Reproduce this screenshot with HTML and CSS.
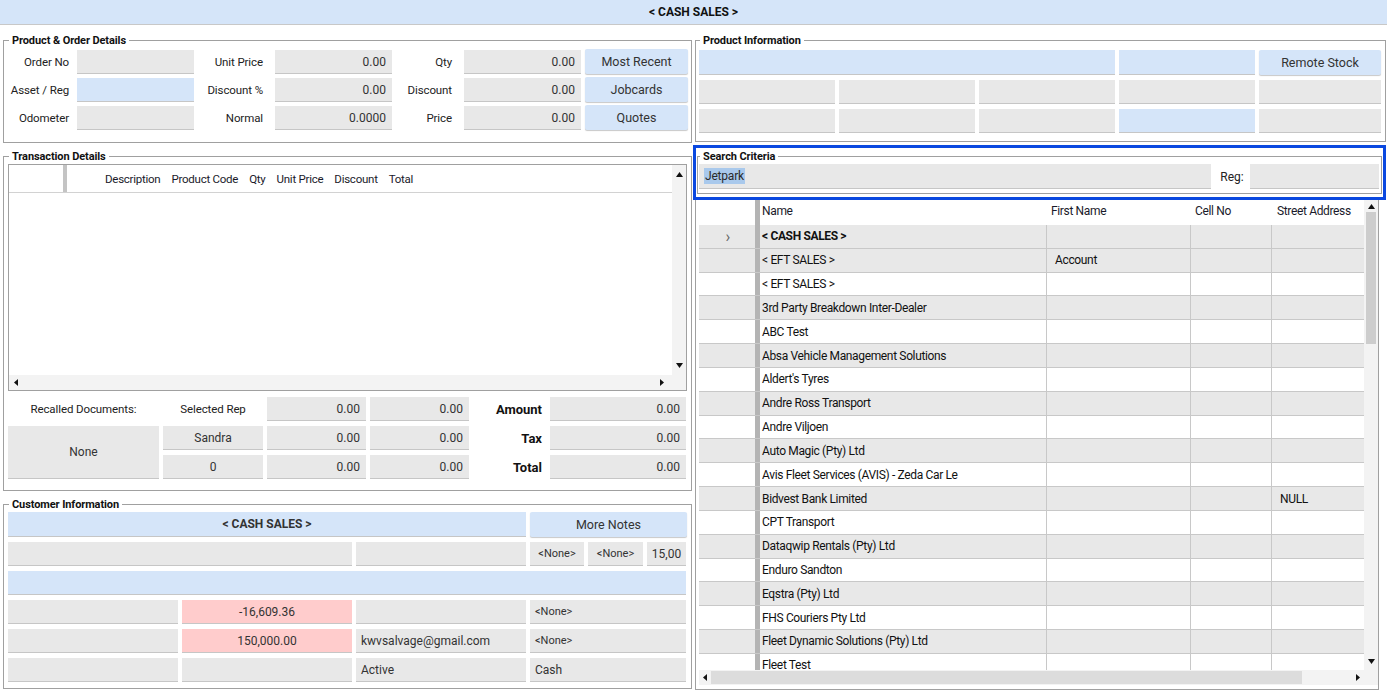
FILE: index.html
```html
<!DOCTYPE html>
<html>
<head>
<meta charset="utf-8">
<title>Cash Sales</title>
<link rel="stylesheet" href="styles.css">
</head>
<body>
<div class="titlebar">&lt; CASH SALES &gt;</div>
<div class="main">
  <div class="leftcol">
    <fieldset class="group g-order">
      <legend>Product &amp; Order Details</legend>
      <div class="order-grid">
        <span class="lbl l1">Order No</span><div class="fld"></div>
        <span class="lbl l2">Unit Price</span><div class="fld num">0.00</div>
        <span class="lbl l3">Qty</span><div class="fld num">0.00</div>
        <div class="btn">Most Recent</div>

        <span class="lbl l1">Asset / Reg</span><div class="fld blue"></div>
        <span class="lbl l2">Discount %</span><div class="fld num">0.00</div>
        <span class="lbl l3">Discount</span><div class="fld num">0.00</div>
        <div class="btn">Jobcards</div>

        <span class="lbl l1">Odometer</span><div class="fld"></div>
        <span class="lbl l2">Normal</span><div class="fld num">0.0000</div>
        <span class="lbl l3">Price</span><div class="fld num">0.00</div>
        <div class="btn">Quotes</div>
      </div>
    </fieldset>

    <fieldset class="group g-trans">
      <legend>Transaction Details</legend>
      <div class="tgrid">
        <div class="tgrid-body">
          <div class="tgrid-head">
            <div class="t-rowhdr"></div>
            <div class="t-bar"></div>
            <span class="th">Description</span>
            <span class="th">Product Code</span>
            <span class="th">Qty</span>
            <span class="th">Unit Price</span>
            <span class="th">Discount</span>
            <span class="th">Total</span>
          </div>
        </div>
        <div class="vscroll t-vs">
          <svg class="arr" width="7" height="5" viewBox="0 0 7 5"><polygon points="3.5,0 7,5 0,5" fill="#111"/></svg>
          <svg class="arr" width="7" height="5" viewBox="0 0 7 5"><polygon points="0,0 7,0 3.5,5" fill="#111"/></svg>
        </div>
        <div class="hscroll t-hs">
          <svg class="arr" width="4" height="7" viewBox="0 0 4 7"><polygon points="4,0 4,7 0,3.5" fill="#111"/></svg>
          <svg class="arr" width="4" height="7" viewBox="0 0 4 7"><polygon points="0,0 4,3.5 0,7" fill="#111"/></svg>
        </div>
      </div>
      <div class="totals">
        <span class="plain">Recalled Documents:</span>
        <span class="plain">Selected Rep</span>
        <div class="fld num">0.00</div>
        <div class="fld num">0.00</div>
        <span class="blbl">Amount</span>
        <div class="fld num">0.00</div>

        <div class="fld center none">None</div>
        <div class="fld center">Sandra</div>
        <div class="fld num">0.00</div>
        <div class="fld num">0.00</div>
        <span class="blbl">Tax</span>
        <div class="fld num">0.00</div>

        <div class="fld center">0</div>
        <div class="fld num">0.00</div>
        <div class="fld num">0.00</div>
        <span class="blbl">Total</span>
        <div class="fld num">0.00</div>
      </div>
    </fieldset>

    <fieldset class="group g-cust">
      <legend>Customer Information</legend>
      <div class="cust-grid">
        <div class="fld blue center bold span3">&lt; CASH SALES &gt;</div>
        <div class="btn">More Notes</div>

        <div class="fld span2"></div>
        <div class="fld"></div>
        <div class="subrow">
          <div class="fld center sm">&lt;None&gt;</div>
          <div class="fld center sm">&lt;None&gt;</div>
          <div class="fld center">15,00</div>
        </div>

        <div class="fld blue span4"></div>

        <div class="fld"></div>
        <div class="fld pink center">-16,609.36</div>
        <div class="fld"></div>
        <div class="fld left sm">&lt;None&gt;</div>

        <div class="fld"></div>
        <div class="fld pink center">150,000.00</div>
        <div class="fld left">kwvsalvage@gmail.com</div>
        <div class="fld left sm">&lt;None&gt;</div>

        <div class="fld"></div>
        <div class="fld"></div>
        <div class="fld left">Active</div>
        <div class="fld left">Cash</div>
      </div>
    </fieldset>
  </div>

  <div class="rightcol">
    <fieldset class="group g-prod">
      <legend>Product Information</legend>
      <div class="prod-grid">
        <div class="fld blue span3"></div>
        <div class="fld blue"></div>
        <div class="btn">Remote Stock</div>
        <div class="fld"></div><div class="fld"></div><div class="fld"></div><div class="fld"></div><div class="fld"></div>
        <div class="fld"></div><div class="fld"></div><div class="fld"></div><div class="fld blue"></div><div class="fld"></div>
      </div>
    </fieldset>

    <div class="searchwrap">
      <fieldset class="group g-search">
        <legend>Search Criteria</legend>
        <div class="search-row">
          <div class="fld left sfield"><span class="sel">Jetpark</span></div>
          <span class="reg">Reg:</span>
          <div class="fld regfld"></div>
        </div>
      </fieldset>
    </div>

    <div class="custpanel">
      <div class="dgrid">
        <div class="dtable">
          <div class="drow dhead">
            <div class="c-hdr"></div><div class="c-bar"></div>
            <div class="c name">Name</div><div class="c first">First Name</div><div class="c cell">Cell No</div><div class="c street">Street Address</div>
          </div>
          <div class="drow alt"><div class="c-hdr">&#x203A;</div><div class="c-bar"></div><div class="c name bold">&lt; CASH SALES &gt;</div><div class="c first"></div><div class="c cell"></div><div class="c street"></div></div>
          <div class="drow alt"><div class="c-hdr"></div><div class="c-bar"></div><div class="c name">&lt; EFT SALES &gt;</div><div class="c first">Account</div><div class="c cell"></div><div class="c street"></div></div>
          <div class="drow"><div class="c-hdr"></div><div class="c-bar"></div><div class="c name">&lt; EFT SALES &gt;</div><div class="c first"></div><div class="c cell"></div><div class="c street"></div></div>
          <div class="drow alt"><div class="c-hdr"></div><div class="c-bar"></div><div class="c name">3rd Party Breakdown Inter-Dealer</div><div class="c first"></div><div class="c cell"></div><div class="c street"></div></div>
          <div class="drow"><div class="c-hdr"></div><div class="c-bar"></div><div class="c name">ABC Test</div><div class="c first"></div><div class="c cell"></div><div class="c street"></div></div>
          <div class="drow alt"><div class="c-hdr"></div><div class="c-bar"></div><div class="c name">Absa Vehicle Management Solutions</div><div class="c first"></div><div class="c cell"></div><div class="c street"></div></div>
          <div class="drow"><div class="c-hdr"></div><div class="c-bar"></div><div class="c name">Aldert's Tyres</div><div class="c first"></div><div class="c cell"></div><div class="c street"></div></div>
          <div class="drow alt"><div class="c-hdr"></div><div class="c-bar"></div><div class="c name">Andre Ross Transport</div><div class="c first"></div><div class="c cell"></div><div class="c street"></div></div>
          <div class="drow"><div class="c-hdr"></div><div class="c-bar"></div><div class="c name">Andre Viljoen</div><div class="c first"></div><div class="c cell"></div><div class="c street"></div></div>
          <div class="drow alt"><div class="c-hdr"></div><div class="c-bar"></div><div class="c name">Auto Magic (Pty) Ltd</div><div class="c first"></div><div class="c cell"></div><div class="c street"></div></div>
          <div class="drow"><div class="c-hdr"></div><div class="c-bar"></div><div class="c name">Avis Fleet Services (AVIS) - Zeda Car Le</div><div class="c first"></div><div class="c cell"></div><div class="c street"></div></div>
          <div class="drow alt"><div class="c-hdr"></div><div class="c-bar"></div><div class="c name">Bidvest Bank Limited</div><div class="c first"></div><div class="c cell"></div><div class="c street">NULL</div></div>
          <div class="drow"><div class="c-hdr"></div><div class="c-bar"></div><div class="c name">CPT Transport</div><div class="c first"></div><div class="c cell"></div><div class="c street"></div></div>
          <div class="drow alt"><div class="c-hdr"></div><div class="c-bar"></div><div class="c name">Dataqwip Rentals (Pty) Ltd</div><div class="c first"></div><div class="c cell"></div><div class="c street"></div></div>
          <div class="drow"><div class="c-hdr"></div><div class="c-bar"></div><div class="c name">Enduro Sandton</div><div class="c first"></div><div class="c cell"></div><div class="c street"></div></div>
          <div class="drow alt"><div class="c-hdr"></div><div class="c-bar"></div><div class="c name">Eqstra (Pty) Ltd</div><div class="c first"></div><div class="c cell"></div><div class="c street"></div></div>
          <div class="drow"><div class="c-hdr"></div><div class="c-bar"></div><div class="c name">FHS Couriers Pty Ltd</div><div class="c first"></div><div class="c cell"></div><div class="c street"></div></div>
          <div class="drow alt"><div class="c-hdr"></div><div class="c-bar"></div><div class="c name">Fleet Dynamic Solutions (Pty) Ltd</div><div class="c first"></div><div class="c cell"></div><div class="c street"></div></div>
          <div class="drow"><div class="c-hdr"></div><div class="c-bar"></div><div class="c name">Fleet Test</div><div class="c first"></div><div class="c cell"></div><div class="c street"></div></div>
        </div>
        <div class="vscroll d-vs">
          <svg class="arr" width="7" height="5" viewBox="0 0 7 5"><polygon points="3.5,0 7,5 0,5" fill="#111"/></svg>
          <div class="vthumb"></div>
          <div class="vspacer"></div>
          <svg class="arr" width="7" height="5" viewBox="0 0 7 5"><polygon points="0,0 7,0 3.5,5" fill="#111"/></svg>
        </div>
        <div class="hscroll d-hs">
          <svg class="arr" width="4" height="7" viewBox="0 0 4 7"><polygon points="4,0 4,7 0,3.5" fill="#111"/></svg>
          <div class="hthumb"></div>
          <div class="hspacer"></div>
          <svg class="arr" width="4" height="7" viewBox="0 0 4 7"><polygon points="0,0 4,3.5 0,7" fill="#111"/></svg>
        </div>
        <div class="corner"></div>
      </div>
    </div>
  </div>
</div>
</body>
</html>
```

FILE: styles.css
```css
* { box-sizing: border-box; }
html, body { margin: 0; padding: 0; }
body {
  width: 1387px;
  height: 690px;
  overflow: hidden;
  background: #fff;
  font-family: Roboto, "Liberation Sans", sans-serif;
  font-size: 12px;
  color: #1e1e1e;
}
.bold { font-weight: bold; }

.titlebar {
  height: 25px;
  background: #d5e5f9;
  border-bottom: 1px solid #c8c8c8;
  display: flex;
  align-items: center;
  justify-content: center;
  font-weight: bold;
  font-size: 12px;
  color: #111;
}

.main { display: flex; }
.leftcol { width: 692px; padding-left: 3px; display: flex; flex-direction: column; }
.rightcol { flex: 1; display: flex; flex-direction: column; }

.group {
  margin: 0;
  border: 1px solid #a0a0a0;
  padding: 0 4px;
  min-width: 0;
}
.group legend {
  font-weight: bold;
  font-size: 11px;
  line-height: 14px;
  padding: 1px 3px 0;
  margin-left: 1px;
  color: #111;
  letter-spacing: -0.1px;
}

/* common field */
.fld {
  background: #e8e8e8;
  border-bottom: 1px solid #c6c6c6;
  height: 100%;
  display: flex;
  align-items: center;
  color: #333;
  white-space: nowrap;
  overflow: hidden;
}
.fld.blue { background: #d5e5f9; }
.fld.pink { background: #ffcccc; }
.fld.num { justify-content: flex-end; padding-right: 6px; }
.fld.center { justify-content: center; }
.fld.left { justify-content: flex-start; padding-left: 5px; }
.fld.sm { font-size: 11px; }
.btn {
  background: #d5e5f9;
  border-radius: 2px;
  box-shadow: 0 1px 1px rgba(0,0,0,0.22);
  display: flex;
  align-items: center;
  justify-content: center;
  color: #333;
  font-size: 12.5px;
  height: 100%;
}
.lbl {
  display: flex;
  align-items: center;
  justify-content: flex-end;
  color: #222;
  white-space: nowrap;
  font-size: 11.5px;
  letter-spacing: -0.1px;
}

/* product & order */
.g-order { margin-top: 8px; padding-top: 2px; padding-bottom: 12px; }
.order-grid {
  display: grid;
  grid-template-columns: 69px 117px 81px 117px 72px 117px 106px;
  grid-auto-rows: 24px;
  row-gap: 4px;
}
.order-grid .l1 { padding-right: 8px; }
.order-grid .l2 { padding-right: 12px; }
.order-grid .l3 { padding-right: 12px; }
.order-grid .btn { margin-left: 4px; margin-right: -1px; margin-top: -1px; height: 25px; }

/* transaction */
.g-trans { margin-top: 6px; padding-top: 0; padding-bottom: 11px; }
.tgrid {
  height: 227px;
  border: 1px solid #a0a0a0;
  display: grid;
  grid-template-columns: 1fr 14px;
  grid-template-rows: 1fr 15px;
}
.tgrid-body { background: #fff; }
.tgrid-head {
  height: 28px;
  border-bottom: 1px solid #d2d2d2;
  display: flex;
  align-items: stretch;
}
.t-rowhdr { width: 54px; }
.t-bar { width: 4px; background: #c4c4c4; margin-right: 38px; }
.th { display: flex; align-items: center; margin-right: 11px; color: #1a1a2a; font-size: 11.5px; letter-spacing: -0.25px; }

.vscroll {
  background: #f3f3f3;
  display: flex;
  flex-direction: column;
  align-items: center;
  justify-content: space-between;
  padding: 5px 0 5px;
}
.t-vs { padding-top: 7px; padding-bottom: 7px; }
.hscroll {
  background: #f3f3f3;
  grid-column: 1 / 3;
  display: flex;
  align-items: center;
  justify-content: space-between;
  padding: 0 22px 0 5px;
}
.arr { display: block; flex: none; }

.totals {
  margin-top: 6px;
  display: grid;
  grid-template-columns: 151px 100px 99px 99px 73px 136px;
  grid-template-rows: 24px 24px 24px;
  column-gap: 4px;
  row-gap: 5px;
}
.plain { display: flex; align-items: center; justify-content: center; color: #222; font-size: 11.5px; letter-spacing: -0.1px; }
.blbl { display: flex; align-items: center; justify-content: flex-end; padding-right: 4px; font-weight: bold; font-size: 13px; color: #111; }
.totals .none { grid-row: 2 / 4; grid-column: 1; }

/* customer */
.g-cust { margin-top: 6px; padding-top: 0; padding-bottom: 6px; }
.cust-grid {
  display: grid;
  grid-template-columns: 170px 170px 170px 156px;
  grid-template-rows: 25px 24px 24px 24px 24px 24px;
  gap: 5px 4px;
}
.cust-grid .btn { margin-right: -1px; }
.span2 { grid-column: span 2; }
.span3 { grid-column: span 3; }
.span4 { grid-column: span 4; }
.subrow {
  display: grid;
  grid-template-columns: 54px 55px 39px;
  column-gap: 4px;
}

/* product info */
.g-prod { margin: 8px 1px 0 3px; padding: 2px 4px 8px 3px; }
.prod-grid {
  display: grid;
  grid-template-columns: 136px 136px 136px 136px 122px;
  grid-template-rows: 25px 24px 24px;
  gap: 5px 4px;
}

/* search */
.searchwrap {
  margin: 3px 1px 0 1px;
  border: 3px solid #0a48e0;
  padding: 0 0 3px 0;
}
.g-search { margin: 1px 1px 0 1px; padding: 0 2px 4px 1px; }
.search-row { display: flex; height: 25px; }
.sfield { flex: 1; padding-left: 4px; }
.sel { background: #a9c9ec; color: #2a2a2a; padding: 0 1px; line-height: 16px; letter-spacing: -0.2px; }
.reg { width: 39px; display: flex; align-items: center; justify-content: center; color: #222; padding-left: 3px; }
.regfld { width: 129px; }

/* customer grid */
.custpanel {
  margin: 0 8px 0 3px;
  height: 490px;
  border-left: 1px solid #a0a0a0;
  border-right: 1px solid #a0a0a0;
  border-bottom: 1px solid #a0a0a0;
  padding: 0 0 4px 3px;
  display: flex;
}
.dgrid {
  flex: 1;
  display: grid;
  grid-template-columns: 1fr 14px;
  grid-template-rows: 1fr 15px;
  min-height: 0;
}
.dtable { overflow: hidden; background: #fff; }
.drow {
  display: grid;
  grid-template-columns: 56px 5px 287px 144px 81px 92px;
  height: 23.83px;
  border-bottom: 1px solid #c8c8c8;
  background: #fff;
}
.drow.alt { background: #e8e8e8; }
.drow.dhead { height: 25px; border-bottom: none; background: #fff; }
.c-hdr {
  display: flex;
  align-items: center;
  justify-content: center;
  color: #666;
  font-size: 16px;
  padding-left: 2px;
}
.c-bar { background: #b4b4b4; }
.c {
  display: flex;
  align-items: center;
  white-space: nowrap;
  overflow: hidden;
  border-right: 1px solid #c8c8c8;
  color: #111;
  letter-spacing: -0.35px;
}
.c.name { padding-left: 2px; }
.c.first, .c.street { padding-left: 8px; }
.c.cell { padding-left: 4px; }
.c.street { border-right: none; }
.dhead .c { border-right: none; color: #1a1a2a; padding-bottom: 4px; }
.dhead .c.first { padding-left: 4px; }
.dhead .c.street { padding-left: 5px; }

.d-vs { padding: 4px 0 6px; justify-content: flex-start; }
.vthumb { width: 10px; height: 132px; background: #cdcdcd; margin-top: 3px; }
.vspacer { flex: 1; }
.d-hs { grid-column: 1; padding: 0 4px 0 4px; justify-content: flex-start; }
.hthumb { width: 591px; height: 13px; background: #dcdcdc; margin-left: 4px; }
.hspacer { flex: 1; }
.corner { background: #f3f3f3; }
```
